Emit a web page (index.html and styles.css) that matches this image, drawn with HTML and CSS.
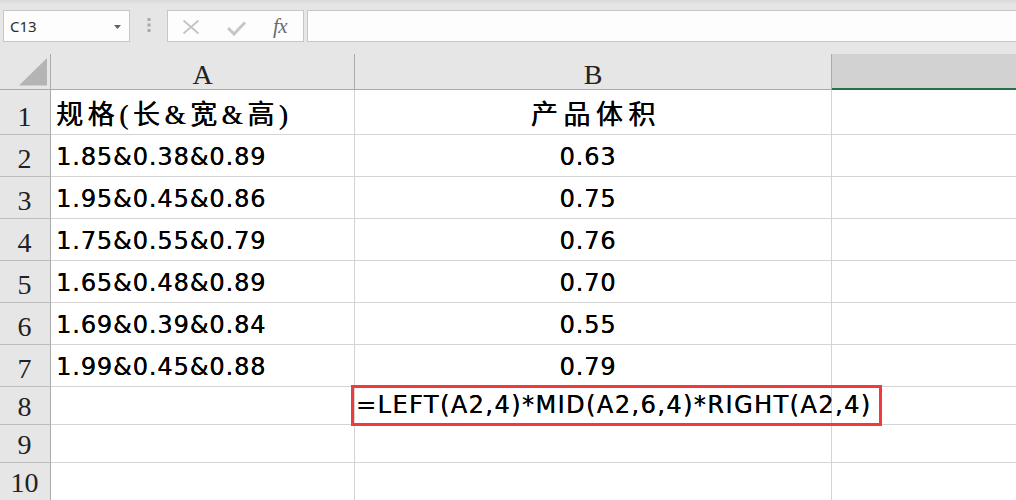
FILE: index.html
```html
<!DOCTYPE html>
<html lang="zh-CN">
<head>
<meta charset="utf-8">
<title>Sheet</title>
<link rel="stylesheet" href="styles.css">
</head>
<body>
<div class="toolbar">
  <div class="namebox">
    <span class="cellref">C13</span>
    <svg class="caret" width="7" height="4" viewBox="0 0 7 4"><polygon points="0,0 7,0 3.5,4" fill="#5f5f5f"/></svg>
  </div>
  <div class="grip">
    <svg width="4" height="14" viewBox="0 0 4 14"><rect x="0.5" y="0" width="3" height="3" fill="#a9a9a9"/><rect x="0.5" y="5.5" width="3" height="3" fill="#a9a9a9"/><rect x="0.5" y="11" width="3" height="3" fill="#a9a9a9"/></svg>
  </div>
  <div class="fnbox">
    <svg class="ico-x" width="18" height="16" viewBox="0 0 18 16"><path d="M1.5 1.5 L16.5 14.5 M16.5 1.5 L1.5 14.5" stroke="#c3c3c3" stroke-width="1.7" fill="none"/></svg>
    <svg class="ico-ok" width="19" height="16" viewBox="0 0 19 16"><path d="M1 8 L7 14 L18 2.5" stroke="#c6c6c6" stroke-width="3" fill="none"/></svg>
    <span class="fx">fx</span>
  </div>
  <div class="formula-input"></div>
</div>

<div class="sheet">
  <div class="corner"><svg width="50" height="35" viewBox="0 0 50 35"><polygon points="19,31.5 47,4 47,31.5" fill="#b4b4b4"/></svg></div>
  <div class="colhead">A</div>
  <div class="colhead">B</div>
  <div class="colhead sel"></div>

  <div class="rh">1</div>
  <div class="cell cjk spec">规格(长&amp;宽&amp;高)</div>
  <div class="cell cjk mid">产品体积</div>
  <div class="cell last"></div>

  <div class="rh">2</div>
  <div class="cell">1.85&amp;0.38&amp;0.89</div>
  <div class="cell num">0.63</div>
  <div class="cell last"></div>

  <div class="rh">3</div>
  <div class="cell">1.95&amp;0.45&amp;0.86</div>
  <div class="cell num">0.75</div>
  <div class="cell last"></div>

  <div class="rh">4</div>
  <div class="cell">1.75&amp;0.55&amp;0.79</div>
  <div class="cell num">0.76</div>
  <div class="cell last"></div>

  <div class="rh">5</div>
  <div class="cell">1.65&amp;0.48&amp;0.89</div>
  <div class="cell num">0.70</div>
  <div class="cell last"></div>

  <div class="rh">6</div>
  <div class="cell">1.69&amp;0.39&amp;0.84</div>
  <div class="cell num">0.55</div>
  <div class="cell last"></div>

  <div class="rh">7</div>
  <div class="cell">1.99&amp;0.45&amp;0.88</div>
  <div class="cell num">0.79</div>
  <div class="cell last"></div>

  <div class="rh">8</div>
  <div class="cell"></div>
  <div class="cell fcell"><span class="formula">=LEFT(A2,4)*MID(A2,6,4)*RIGHT(A2,4)</span></div>
  <div class="cell last"></div>

  <div class="rh">9</div>
  <div class="cell"></div>
  <div class="cell"></div>
  <div class="cell last"></div>

  <div class="rh">10</div>
  <div class="cell"></div>
  <div class="cell"></div>
  <div class="cell last"></div>
</div>
</body>
</html>
```

FILE: styles.css
```css
* { box-sizing: border-box; }
html, body { margin: 0; padding: 0; }
body {
  width: 1016px;
  height: 500px;
  overflow: hidden;
  background: #ffffff;
  font-family: "DejaVu Sans", sans-serif;
}

/* ---------- formula toolbar ---------- */
.toolbar {
  height: 54px;
  display: flex;
  align-items: flex-start;
  padding-top: 10px;
  background: linear-gradient(#d8d8d8 0, #e6e6e6 4px, #e6e6e6 100%);
}
.namebox {
  margin-left: 3px;
  width: 127px;
  height: 32px;
  border: 1px solid #c6c6c6;
  background: #fdfdfd;
  display: flex;
  align-items: center;
  padding: 0 8px 0 6px;
}
.cellref {
  font-family: "Noto Sans", sans-serif;
  font-size: 15px;
  color: #2b2b2b;
  line-height: 20px;
}
.caret { margin-left: auto; margin-top: 1px; }
.grip {
  width: 37px;
  height: 32px;
  display: flex;
  align-items: center;
  justify-content: center;
  padding-left: 1px;
}
.grip svg { margin-top: -3px; }
.fnbox {
  width: 137px;
  height: 32px;
  border: 1px solid #c6c6c6;
  background: #fdfdfd;
  display: flex;
  align-items: center;
  padding-left: 14px;
}
.ico-x { margin-top: 2px; }
.ico-ok { margin-left: 27px; margin-top: 3px; }
.fx {
  margin-left: 27px;
  font-family: "Liberation Serif", serif;
  font-style: italic;
  font-size: 21px;
  color: #6b6b6b;
  line-height: 24px;
  letter-spacing: -0.5px;
}
.formula-input {
  flex: 1;
  margin-left: 3px;
  margin-right: -2px;
  height: 32px;
  border: 1px solid #c6c6c6;
  background: #fdfdfd;
}

/* ---------- sheet grid ---------- */
.sheet {
  display: grid;
  grid-template-columns: 51px 304px 477px 1fr;
  grid-template-rows: 36px 45px repeat(6, 42px) repeat(3, 38px);
  background: #ffffff;
}
.corner {
  background: #e6e6e6;
  border-right: 1px solid #ababab;
  border-bottom: 1px solid #ababab;
}
.corner svg { display: block; }
.colhead {
  background: #e6e6e6;
  border-right: 1px solid #ababab;
  border-bottom: 1px solid #ababab;
  display: flex;
  align-items: flex-end;
  justify-content: center;
  font-family: "Liberation Serif", serif;
  font-size: 28px;
  line-height: 28px;
  color: #222;
}
.colhead.sel {
  background: #d2d2d2;
  border-right: none;
  border-bottom: 2px solid #217346;
}
.rh {
  background: #e6e6e6;
  border-right: 1px solid #ababab;
  border-bottom: 1px solid #bdbdbd;
  display: flex;
  align-items: flex-end;
  justify-content: center;
  padding: 0 1px 3px 0;
  font-family: "Liberation Serif", serif;
  font-size: 28px;
  line-height: 28px;
  color: #222;
}
.cell {
  border-right: 1px solid #d4d4d4;
  border-bottom: 1px solid #d4d4d4;
  display: flex;
  align-items: flex-end;
  padding: 0 0 5px 5px;
  font-family: "DejaVu Sans", sans-serif;
  font-size: 24px;
  line-height: 28px;
  letter-spacing: 0.9px;
  color: #000;
  white-space: nowrap;
  text-shadow: 0.2px 0 0 #000;
}
.cell.last { border-right: none; }
.cell.num {
  justify-content: center;
  padding-left: 0;
  padding-right: 10px;
}
.cell.cjk {
  font-family: "Liberation Serif", "Noto Sans CJK SC", serif;
  font-size: 27px;
  line-height: 30px;
  letter-spacing: 5.5px;
  padding-bottom: 4px;
  text-shadow: 0.5px 0 0 #000;
}
.cell.cjk.spec { letter-spacing: 4.6px; }
.cell.mid { justify-content: center; padding-left: 5.5px; }

.cell.fcell {
  align-items: flex-start;
  padding: 0;
}
.formula {
  position: relative;
  z-index: 1;
  display: block;
  flex: none;
  width: 531px;
  height: 41px;
  margin: -2px 0 0 -4px;
  border: 3px solid #ef3b3e;
  padding-left: 2px;
  font-family: "DejaVu Sans", sans-serif;
  font-size: 24px;
  line-height: 35px;
  letter-spacing: 1.45px;
  color: #000;
  text-shadow: 0.2px 0 0 #000;
}
```
